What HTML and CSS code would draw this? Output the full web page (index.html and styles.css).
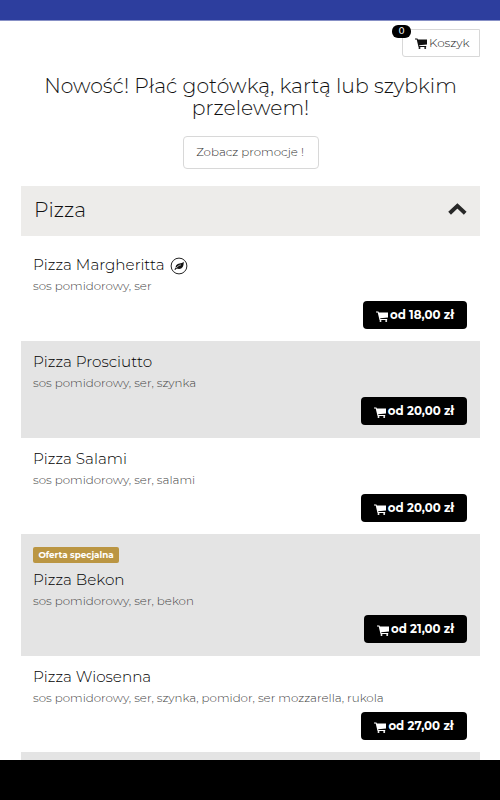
FILE: index.html
```html
<!DOCTYPE html>
<html lang="pl">
  <head>
    <meta charset="UTF-8" />
    <meta name="viewport" content="width=device-width, initial-scale=1.0" />
    <title>Menu</title>
    <link rel="stylesheet" href="styles.css">
  </head>
  <body>
    <svg class="sprite" width="0" height="0">
      <symbol id="cart" viewBox="0 0 12 11">
        <path d="M0 .4h2.4l.5 1.2H12v4.800l-7.800.9.2.600h6.800v1H3.500L1.700 1.600H0z" />
        <circle cx="4.500" cy="9.900" r="1" />
        <circle cx="10.200" cy="9.900" r="1" />
      </symbol>
    </svg>
    <div class="page">
      <div class="topbar"></div>
      <div class="container">
        <div class="cart-row">
          <a class="cart-btn">
            <span class="badge">0</span>
            <svg class="cart"><use href="#cart" /></svg>
            <span class="cart-label">Koszyk</span>
          </a>
        </div>
        <h1>Nowość! Płać gotówką, kartą lub szybkim<br>przelewem!</h1>
        <a class="promo-btn"><span>Zobacz promocje !</span></a>

        <div class="category">
          <h2>Pizza</h2>
          <svg class="chevron" viewBox="0 0 20 14">
            <path d="M2.6 11.2 10.400 3.900l7.800 7.300" />
          </svg>
        </div>

        <div class="item first">
          <h3>
            <span>Pizza Margheritta</span>
            <svg class="leaf" viewBox="0 0 18 18">
              <circle cx="9" cy="9" r="7.9" />
              <path d="M13.7 4.7c.2 4.500-1.400 7.200-4.600 7.200-1 0-1.700-.2-2.300-.5l-1.700 1.500-.7-.6 1.300-1.500c-.4-2.300 1.300-3.900 3.800-4.300 1.700-.2 3-.6 4.200-1.800z" />
              <path class="vein" d="M6.2 11c1.200-1.700 2.600-2.600 4.700-3.100" />
            </svg>
          </h3>
          <p>sos pomidorowy, ser</p>
          <a class="price w18"><svg class="cart"><use href="#cart" /></svg><span>od 18,00 zł</span></a>
        </div>
        <div class="item odd">
          <h3>Pizza Prosciutto</h3>
          <p>sos pomidorowy, ser, szynka</p>
          <a class="price"><svg class="cart"><use href="#cart" /></svg><span>od 20,00 zł</span></a>
        </div>
        <div class="item short">
          <h3>Pizza Salami</h3>
          <p>sos pomidorowy, ser, salami</p>
          <a class="price"><svg class="cart"><use href="#cart" /></svg><span>od 20,00 zł</span></a>
        </div>
        <div class="item odd special">
          <span class="label">Oferta specjalna</span>
          <h3>Pizza Bekon</h3>
          <p>sos pomidorowy, ser, bekon</p>
          <a class="price w21"><svg class="cart"><use href="#cart" /></svg><span>od 21,00 zł</span></a>
        </div>
        <div class="item short">
          <h3>Pizza Wiosenna</h3>
          <p>sos pomidorowy, ser, szynka, pomidor, ser mozzarella, rukola</p>
          <a class="price"><svg class="cart"><use href="#cart" /></svg><span>od 27,00 zł</span></a>
        </div>
        <div class="item odd"></div>
      </div>
    </div>
  </body>
</html>
```
FILE: styles.css
```css
* {
  box-sizing: border-box;
}
body {
  margin: 0;
  background-color: #000;
  color: #111;
  font-family: Montserrat, Inter, "Open Sans", sans-serif;
  font-weight: 300;
}
.sprite {
  position: absolute;
}
.page {
  height: 760px;
  overflow: hidden;
  background-color: #fff;
}
.topbar {
  height: 21px;
  background-color: #2d3e9e;
  border-bottom: 1px solid #8790c6;
}
.container {
  margin: 0 20px 0 21px;
}
.cart-row {
  display: flex;
  justify-content: flex-end;
  padding-top: 8px;
}
.cart {
  width: 12px;
  height: 11px;
  flex: none;
  fill: currentColor;
}
.cart-btn {
  position: relative;
  display: flex;
  align-items: center;
  width: 78px;
  height: 28px;
  padding-left: 12px;
  border: 1px solid #d8d8d8;
  border-radius: 3px 0 0 3px;
  font-size: 12px;
}
.cart-label {
  margin: -1px 0 0 2px;
  color: #222;
}
.badge {
  position: absolute;
  top: -5px;
  left: -11px;
  width: 19px;
  height: 13px;
  border-radius: 6px;
  background-color: #000;
  color: #fff;
  font-size: 8.5px;
  font-weight: 500;
  line-height: 12px;
  text-align: center;
}
h1 {
  margin: 18px -5px 17px;
  font-size: 20.35px;
  font-weight: 300;
  line-height: 22px;
  text-align: center;
}
.promo-btn {
  display: flex;
  align-items: center;
  justify-content: center;
  width: 136px;
  height: 33px;
  margin: 0 auto 17px;
  padding: 0 1px 2px 0;
  border: 1px solid #d8d8d8;
  border-radius: 4px;
  color: #333;
  font-size: 11.85px;
}
.category {
  display: flex;
  align-items: center;
  justify-content: space-between;
  height: 50px;
  padding: 0 13px 3px;
  background-color: #edecea;
}
h2 {
  margin: 0;
  color: #111;
  font-size: 20.3px;
  font-weight: 300;
}
.chevron {
  width: 20px;
  height: 14px;
  margin-top: -1px;
  fill: none;
  stroke: #282828;
  stroke-width: 4;
}
.item {
  display: flex;
  flex-direction: column;
  align-items: flex-start;
  height: 97px;
  padding: 10px 13px 0 12px;
}
.odd {
  background-color: #e4e4e4;
}
.first {
  height: 105px;
  padding-top: 18px;
}
.short {
  height: 96px;
}
.special {
  height: 122px;
  padding-top: 13px;
}
h3 {
  display: flex;
  align-items: center;
  height: 20px;
  margin: 0;
  color: #000;
  font-size: 15.2px;
  font-weight: 300;
}
.leaf {
  width: 18px;
  height: 18px;
  margin: 3px 0 0 5px;
  fill: #111;
}
.leaf circle {
  fill: none;
  stroke: #222;
}
.leaf .vein {
  fill: none;
  stroke: #fff;
  stroke-width: 0.7;
}
.item p {
  height: 16px;
  margin: 4px 0 0;
  color: #444;
  font-size: 11.85px;
  line-height: 16px;
  white-space: nowrap;
}
.price {
  display: flex;
  align-items: center;
  justify-content: center;
  gap: 2px;
  width: 106px;
  height: 28px;
  margin-top: 6px;
  margin-left: auto;
  border-radius: 4px;
  background-color: #000;
  color: #fff;
  font-size: 11.75px;
  font-weight: 700;
  white-space: nowrap;
}
.price .cart {
  margin-top: 3px;
}
.w18 {
  width: 104px;
  margin-top: 7px;
}
.w21 {
  width: 103px;
}
.label {
  width: 86px;
  height: 16px;
  margin-bottom: 6px;
  border-radius: 2px;
  background-color: #bb9643;
  color: #fff;
  font-size: 8.75px;
  font-weight: 700;
  line-height: 16px;
  text-align: center;
}
```
